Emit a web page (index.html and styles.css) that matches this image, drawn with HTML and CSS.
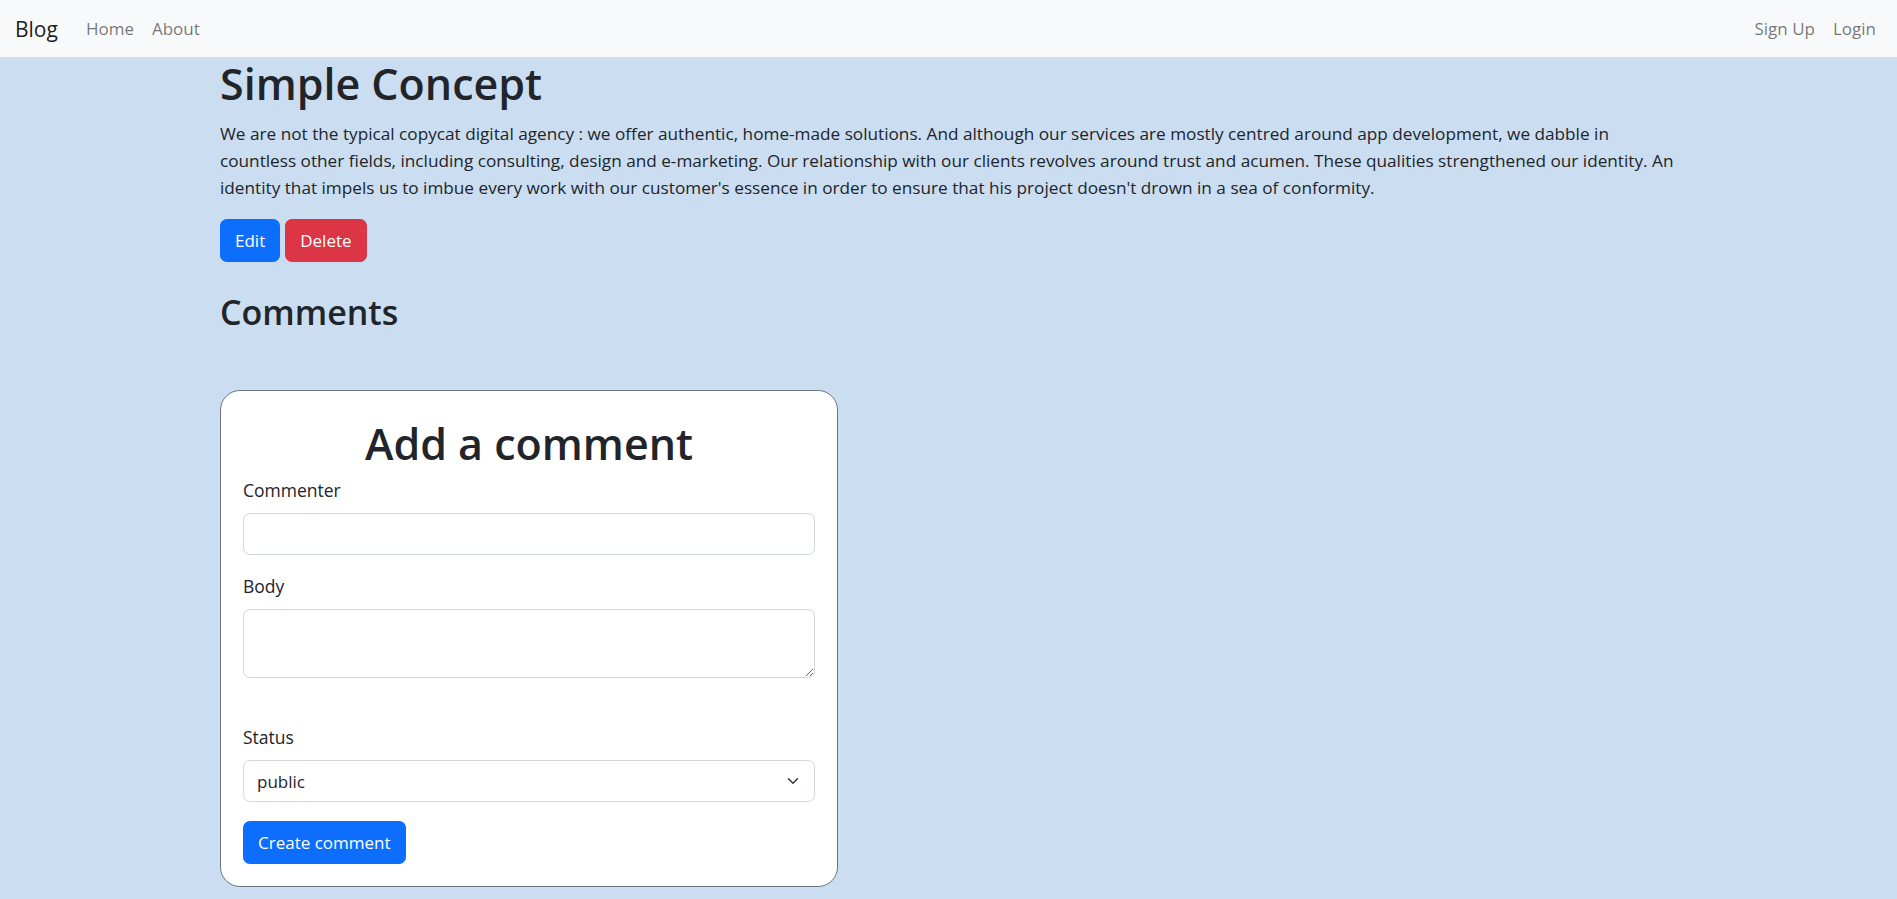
FILE: index.html
```html
<!DOCTYPE html>
<html lang="en">
<head>
<meta charset="utf-8">
<title>Blog</title>
<link rel="stylesheet" href="styles.css">
</head>
<body>
<nav class="navbar">
  <div class="nav-left">
    <a class="brand" href="#">Blog</a>
    <a class="nav-link" href="#">Home</a>
    <a class="nav-link" href="#">About</a>
  </div>
  <div class="nav-right">
    <a class="nav-link" href="#">Sign Up</a>
    <a class="nav-link" href="#">Login</a>
  </div>
</nav>
<main class="container">
  <h1 class="title">Simple Concept</h1>
  <p class="body-text">We are not the typical copycat digital agency : we offer authentic, home-made solutions. And although our services are mostly centred around app development, we dabble in countless other fields, including consulting, design and e-marketing. Our relationship with our clients revolves around trust and acumen. These qualities strengthened our identity. An identity that impels us to imbue every work with our customer's essence in order to ensure that his project doesn't drown in a sea of conformity.</p>
  <div class="actions">
    <a class="btn btn-primary" href="#">Edit</a>
    <a class="btn btn-danger" href="#">Delete</a>
  </div>
  <h2 class="comments-title">Comments</h2>
  <form class="card">
    <h1 class="card-title">Add a comment</h1>
    <div class="field">
      <label class="label" for="commenter">Commenter</label>
      <input class="control" id="commenter" type="text">
    </div>
    <div class="field field-body">
      <label class="label" for="body">Body</label>
      <textarea class="control" id="body" rows="2"></textarea>
    </div>
    <div class="field field-status">
      <label class="label" for="status">Status</label>
      <select class="control select" id="status">
        <option>public</option>
        <option>private</option>
        <option>archived</option>
      </select>
    </div>
    <div class="submit-row">
      <button class="btn btn-primary" type="button">Create comment</button>
    </div>
  </form>
</main>
</body>
</html>
```

FILE: styles.css
```css
* { box-sizing: border-box; }

html, body { margin: 0; padding: 0; }

body {
  font-family: "Open Sans", "Noto Sans", "Liberation Sans", sans-serif;
  font-size: 17.5px;
  line-height: 27px;
  color: #212529;
  background: #cbddf1;
  min-height: 899px;
}

a { text-decoration: none; }

.navbar {
  height: 57px;
  background: #f8f9fa;
  display: flex;
  align-items: center;
  justify-content: space-between;
  padding: 0 12px 0 15px;
}

.nav-left, .nav-right { display: flex; align-items: center; }

.brand {
  font-size: 21px;
  line-height: 34px;
  color: rgba(0, 0, 0, 0.9);
  margin-right: 19px;
}

.nav-link {
  font-size: 17px;
  padding: 0 9px;
  color: rgba(0, 0, 0, 0.55);
}

.container {
  width: 1457px;
  margin: 0 auto;
}

.title {
  font-size: 43px;
  font-weight: 600;
  line-height: 54px;
  margin: 0 0 9px 0;
}

.body-text {
  font-size: 17.2px;
  margin: 0 -8px 18px 0;
}

.actions { display: flex; gap: 5px; }

.btn {
  display: inline-block;
  border: 1px solid transparent;
  border-radius: 6.75px;
  padding: 7px 14px;
  font-family: inherit;
  font-size: 17px;
  line-height: 27px;
  color: #fff;
  cursor: pointer;
}

.btn-primary { background: #0d6efd; border-color: #0d6efd; }
.btn-danger { background: #dc3545; border-color: #dc3545; }

.comments-title {
  font-size: 34px;
  font-weight: 600;
  line-height: 43px;
  margin: 29px 0 56px 0;
}

.card {
  width: 618px;
  background: #fff;
  border: 1px solid #6c757d;
  border-radius: 20px;
  padding: 22px 22px 22px 22px;
}

.card-title {
  text-align: center;
  font-size: 43px;
  font-weight: 600;
  line-height: 54px;
  margin: 4px 0 6px 0;
}

.field { margin-bottom: 18px; }
.field-body { margin-bottom: 46px; }
.field-status { margin-bottom: 19px; }

.label {
  display: block;
  margin-bottom: 9px;
}

.control {
  display: block;
  width: 100%;
  font-family: inherit;
  font-size: 17px;
  line-height: 27px;
  color: #212529;
  background: #fff;
  border: 1px solid #d3d8de;
  border-radius: 6.75px;
  padding: 6px 13px;
  height: 42px;
}

textarea.control {
  height: 69px;
  resize: vertical;
}

.select {
  appearance: none;
  -webkit-appearance: none;
  padding-right: 40px;
  background-image: url("data:image/svg+xml,%3csvg xmlns='http://www.w3.org/2000/svg' viewBox='0 0 16 16'%3e%3cpath fill='none' stroke='%23343a40' stroke-linecap='round' stroke-linejoin='round' stroke-width='2' d='m2 5 6 6 6-6'/%3e%3c/svg%3e");
  background-repeat: no-repeat;
  background-position: right 13px center;
  background-size: 16px 12px;
}

.submit-row { display: flex; }
```
